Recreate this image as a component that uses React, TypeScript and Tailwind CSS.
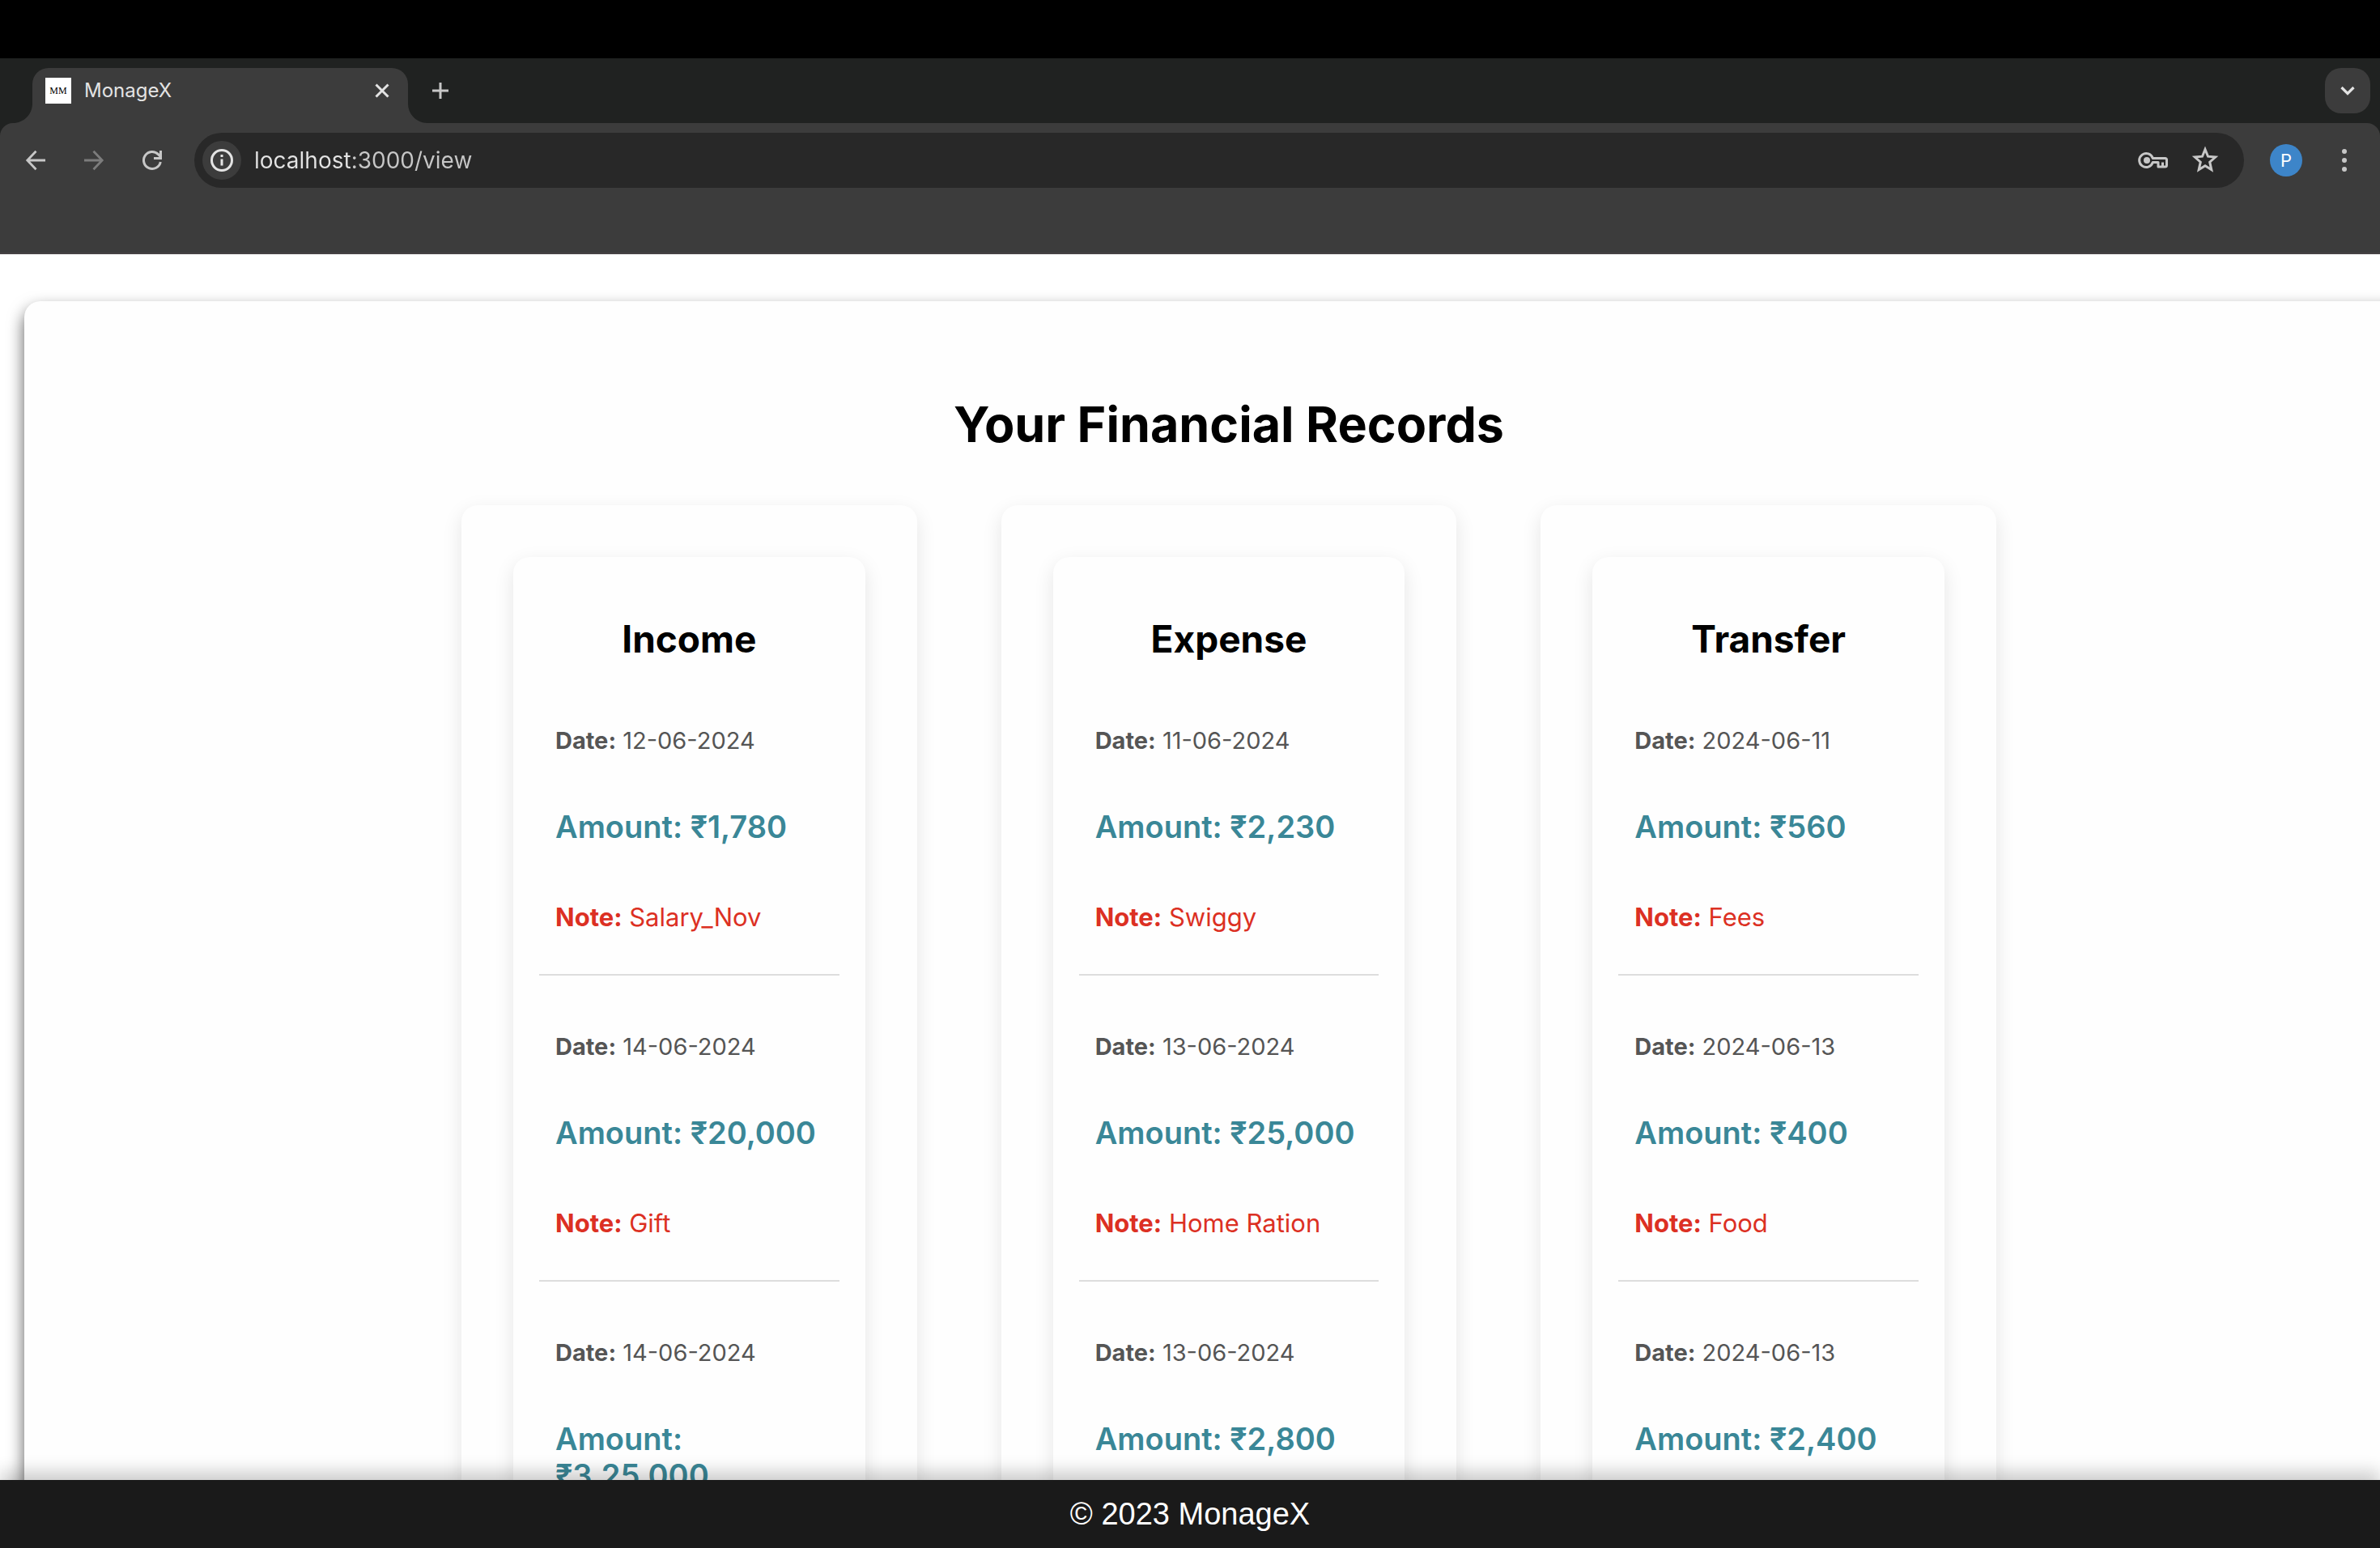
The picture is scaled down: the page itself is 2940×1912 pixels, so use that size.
import React from "react";

type RecordItem = { date: string; amount: string; note?: string };
type Column = { title: string; records: RecordItem[] };

const columns: Column[] = [
  {
    title: "Income",
    records: [
      { date: "12-06-2024", amount: "₹1,780", note: "Salary_Nov" },
      { date: "14-06-2024", amount: "₹20,000", note: "Gift" },
      { date: "14-06-2024", amount: "₹3,25,000" },
    ],
  },
  {
    title: "Expense",
    records: [
      { date: "11-06-2024", amount: "₹2,230", note: "Swiggy" },
      { date: "13-06-2024", amount: "₹25,000", note: "Home Ration" },
      { date: "13-06-2024", amount: "₹2,800" },
    ],
  },
  {
    title: "Transfer",
    records: [
      { date: "2024-06-11", amount: "₹560", note: "Fees" },
      { date: "2024-06-13", amount: "₹400", note: "Food" },
      { date: "2024-06-13", amount: "₹2,400" },
    ],
  },
];

function TabStrip() {
  return (
    <div className="flex h-20 items-start bg-[#202221] pt-3 pr-3 pl-10">
      <div className="relative flex h-[68px] w-[464px] rounded-t-[20px] bg-[#3c3c3c] px-4 pt-3">
        <svg className="absolute bottom-0 -left-6 size-6" viewBox="0 0 24 24" aria-hidden="true">
          <path d="M24 0v24H0C13.3 24 24 13.3 24 0z" fill="#3c3c3c" />
        </svg>
        <svg className="absolute -right-6 bottom-0 size-6" viewBox="0 0 24 24" aria-hidden="true">
          <path d="M0 0v24h24C10.7 24 0 13.3 0 0z" fill="#3c3c3c" />
        </svg>
        <div className="flex size-8 items-center justify-center bg-white font-['Liberation_Serif',serif] text-[12px] leading-none text-black">
          MM
        </div>
        <span className="ml-4 flex-1 text-[24px] leading-8 text-[#e3e3e3]">MonageX</span>
        <button type="button" aria-label="Close tab" className="size-8">
          <svg viewBox="0 0 32 32" className="size-8" fill="none" stroke="#e3e3e3" strokeWidth="3">
            <path d="M8.500 8.500l15 15M23.500 8.500l-15 15" />
          </svg>
        </button>
      </div>
      <button type="button" aria-label="New tab" className="mt-2 ml-5 size-10">
        <svg viewBox="0 0 40 40" className="size-10" fill="none" stroke="#c7c7c7" strokeWidth="3">
          <path d="M20 10v20M10 20h20" />
        </svg>
      </button>
      <button type="button" aria-label="Search tabs" className="ml-auto size-14 rounded-[20px] bg-[#3c3c3c]">
        <svg viewBox="0 0 56 56" className="size-14" fill="none" stroke="#e3e3e3" strokeWidth="3.2">
          <path d="M20.5 24l7.500 7.500 7.500-7.500" />
        </svg>
      </button>
    </div>
  );
}

function Toolbar() {
  return (
    <div className="bg-[#202221]">
      <div className="h-[162px] rounded-t-[16px] border-b-2 border-[#464244] bg-[#3c3c3c] pt-3">
        <div className="flex h-[68px] items-center pr-6 pl-6">
          <button type="button" aria-label="Back" className="size-10">
            <svg viewBox="0 0 40 40" className="size-10" fill="none" stroke="#c7c7c7" strokeWidth="2.800">
              <path d="M20.500 8.800L9.800 20l10.700 11.200M10 20h22" />
            </svg>
          </button>
          <button type="button" aria-label="Forward" disabled className="ml-8 size-10">
            <svg viewBox="0 0 40 40" className="size-10" fill="none" stroke="#7c7c7c" strokeWidth="2.800">
              <path d="M19.500 8.800L30.200 20 19.500 31.200M30 20H8" />
            </svg>
          </button>
          <button type="button" aria-label="Reload" className="ml-8 size-10">
            <svg viewBox="0 0 40 40" className="size-10" fill="none" stroke="#c7c7c7" strokeWidth="3">
              <path d="M30.300 22A10.500 10.500 0 1 1 27.500 12.600L30 15.200" />
              <path d="M30.500 8v9.500H22" />
            </svg>
          </button>
          <div className="ml-8 flex h-[68px] flex-1 items-center rounded-full bg-[#282828] pr-7 pl-[10px]">
            <button type="button" aria-label="Site information" className="size-12 rounded-full bg-[#3c3c3c]">
              <svg viewBox="0 0 48 48" className="size-12" fill="none" stroke="#e3e3e3" strokeWidth="3">
                <circle cx="24" cy="24" r="12.500" />
                <path d="M24 22.500v8M24 17v3" />
              </svg>
            </button>
            <input
              type="text"
              aria-label="Address"
              defaultValue="localhost:3000/view"
              className="ml-4 h-12 min-w-0 flex-1 bg-[linear-gradient(90deg,#e3e3e3_120px,#c7c7c7_120px)] bg-clip-text text-[28px] leading-[48px] text-transparent outline-none"
            />
            <button type="button" aria-label="Saved passwords" className="size-10">
              <svg viewBox="0 0 40 40" className="size-10" fill="none" stroke="#c7c7c7" strokeWidth="3">
                <path d="M19.300 17.500a8.500 8.500 0 1 0 0 5H26v5.500h8.500q2 0 2-2V19.500q0-2-2-2z" strokeLinejoin="round" />
                <path d="M31.500 28v-5.500" />
                <circle cx="12" cy="20" r="4" fill="#c7c7c7" stroke="none" />
              </svg>
            </button>
            <button type="button" aria-label="Bookmark this page" className="ml-6 size-10">
              <svg viewBox="0 0 40 40" className="size-10" fill="none" stroke="#c7c7c7" strokeWidth="3">
                <path d="M20 6.500l3.500 8.700 9.200.8-7 6.200 2.100 9.300L20 26.700l-7.800 4.800 2.100-9.300-7-6.200 9.200-.8z" />
              </svg>
            </button>
          </div>
          <button
            type="button"
            aria-label="Profile"
            className="ml-8 size-10 rounded-full bg-[#3d85c9] text-[22px] leading-10 text-white"
          >
            P
          </button>
          <button type="button" aria-label="Menu" className="ml-8 size-10">
            <svg viewBox="0 0 40 40" className="size-10" fill="#c7c7c7">
              <circle cx="20" cy="9" r="3" />
              <circle cx="20" cy="20" r="3" />
              <circle cx="20" cy="31" r="3" />
            </svg>
          </button>
        </div>
      </div>
    </div>
  );
}

function RecordEntry({ date, amount, note }: RecordItem) {
  return (
    <li className={note ? "border-b-2 border-[#dddddd] px-5 pt-[70px] pb-[51px]" : "px-5 pt-[70px]"}>
      <p className="text-[29px] leading-9 text-[#555555]">
        <strong>Date:</strong> {date}
      </p>
      <p className="mt-[66px] text-[38px] leading-[45px] font-semibold text-[#3a8797]">Amount: {amount}</p>
      {note && (
        <p className="mt-[70px] text-[31px] leading-[38px] text-[#dc3023]">
          <strong>Note:</strong> {note}
        </p>
      )}
    </li>
  );
}

function RecordColumn({ title, records }: Column) {
  return (
    <section className="flex flex-col rounded-[20px] bg-[#fefefe] p-16 shadow-[0_8px_24px_rgba(0,0,0,0.1)]">
      <div className="flex-1 rounded-[20px] bg-[#fefefe] px-8 pt-[73px] pb-8 shadow-[0_8px_24px_rgba(0,0,0,0.1)]">
        <h2 className="mb-[10px] text-center text-[46px] leading-[56px] font-bold text-black">{title}</h2>
        <ul>
          {records.map((record, index) => (
            <RecordEntry key={index} {...record} />
          ))}
        </ul>
      </div>
    </section>
  );
}

export default function App() {
  return (
    <div className="flex h-screen flex-col bg-white font-['Inter',sans-serif]">
      <header>
        <div className="h-[72px] bg-black" />
        <TabStrip />
        <Toolbar />
      </header>
      <main className="min-h-0 flex-1 overflow-hidden pt-[58px] pl-[30px]">
        <div className="-mr-[66px] rounded-[20px] bg-[#fefefe] px-[540px] pt-[114px] pb-16 shadow-[0_10px_20px_rgba(0,0,0,0.65)]">
          <h1 className="mb-[62px] text-center text-[61px] leading-[76px] font-bold text-black">
            Your Financial Records
          </h1>
          <div className="grid grid-cols-3 gap-[104px]">
            {columns.map((column) => (
              <RecordColumn key={column.title} {...column} />
            ))}
          </div>
        </div>
      </main>
      <footer className="relative flex h-[84px] items-center justify-center bg-[#1a1a1a] font-['Liberation_Sans',Arial,sans-serif] text-[38px] leading-[44px] text-white shadow-[0_-10px_20px_rgba(0,0,0,0.2)]">
        © 2023 MonageX
      </footer>
    </div>
  );
}
